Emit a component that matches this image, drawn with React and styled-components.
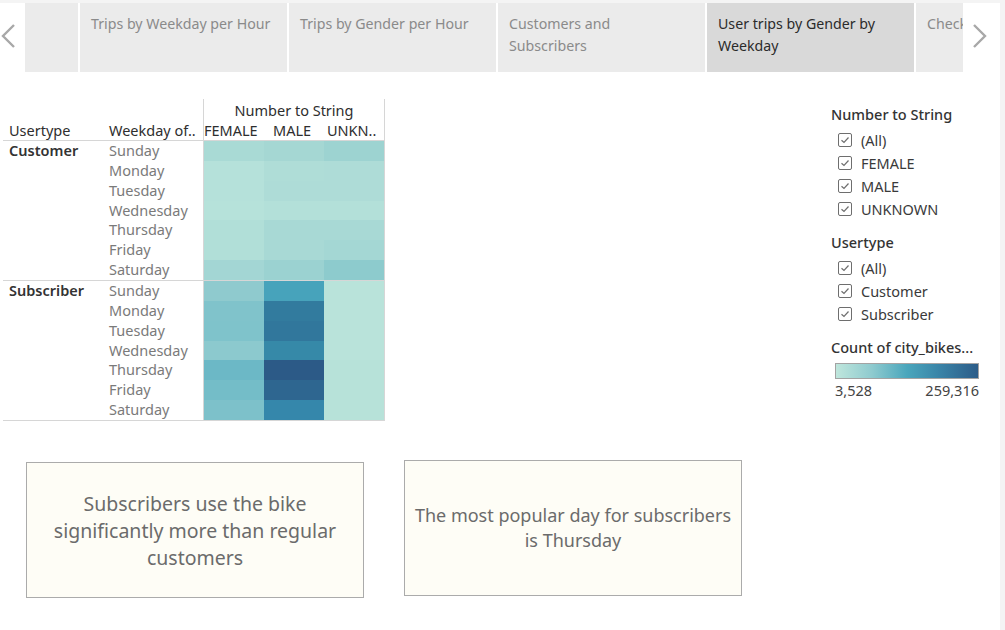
import React from 'react';
import styled, { createGlobalStyle } from 'styled-components';

const GlobalStyle = createGlobalStyle`
  html, body {
    margin: 0;
    padding: 0;
    background: #ffffff;
  }
  body {
    font-family: "Noto Sans", "Open Sans", sans-serif;
    color: #333;
  }
`;

const Page = styled.div`
  width: 1005px;
  height: 630px;
  box-sizing: border-box;
  border-top: 3px solid #f4f4f4;
  border-right: 5px solid #f4f4f4;
  overflow: hidden;
`;

const TabBar = styled.div`
  display: flex;
  align-items: stretch;
  height: 69px;
`;

const ArrowButton = styled.div`
  width: ${p => p.$w}px;
  flex: none;
  display: flex;
  align-items: flex-start;
  justify-content: ${p => (p.$start ? 'flex-start' : 'center')};
  padding-top: 20px;
  box-sizing: border-box;
`;

const TabStrip = styled.div`
  display: flex;
  gap: 2px;
  width: 938px;
  overflow: hidden;
  flex: none;
`;

const Tab = styled.div`
  flex: none;
  width: ${p => p.$w}px;
  box-sizing: border-box;
  padding: 10px 15px 0 11px;
  background: ${p => (p.$active ? '#d9d9d9' : '#ebebeb')};
  color: ${p => (p.$active ? '#2b2b2b' : '#8a8a8a')};
  font-size: 14.2px;
  line-height: 22px;
  white-space: ${p => (p.$clip ? 'nowrap' : 'normal')};
  overflow: hidden;
`;

const Main = styled.div`
  display: flex;
  padding-top: 27px;
`;

const LeftCol = styled.div`
  width: 831px;
  flex: none;
`;

const Table = styled.div`
  margin-left: 3px;
  width: 382px;
`;

const HeaderRow = styled.div`
  display: flex;
  height: 41px;
  border-bottom: 1px solid #d6d6d6;
`;

const HeadLabel = styled.div`
  width: ${p => p.$w}px;
  flex: none;
  box-sizing: border-box;
  padding-left: 6px;
  align-self: flex-end;
  font-size: 14.5px;
  line-height: 20px;
  color: #2e2e2e;
  white-space: nowrap;
`;

const HeatHead = styled.div`
  width: 180px;
  flex: none;
  border-left: 1px solid #d6d6d6;
  border-right: 1px solid #d6d6d6;
  display: flex;
  flex-direction: column;
  justify-content: flex-end;
`;

const HeatTitle = styled.div`
  text-align: center;
  font-size: 14.5px;
  line-height: 20px;
  color: #2e2e2e;
`;

const HeatCols = styled.div`
  display: grid;
  grid-template-columns: 69px 54px 57px;
  font-size: 14.5px;
  line-height: 20px;
  color: #2e2e2e;
  white-space: nowrap;
`;

const Group = styled.div`
  display: flex;
  height: 139px;
  border-bottom: 1px solid #d6d6d6;
`;

const TypeCell = styled.div`
  width: 100px;
  flex: none;
  box-sizing: border-box;
  padding-left: 6px;
  font-size: 14.5px;
  line-height: 19px;
  font-weight: 600;
  color: #333;
`;

const DayCol = styled.div`
  width: 100px;
  flex: none;
  box-sizing: border-box;
  padding-left: 6px;
  display: grid;
  grid-template-rows: repeat(7, 1fr);
`;

const DayLabel = styled.div`
  font-size: 14.5px;
  line-height: 19px;
  color: #7a7a7a;
`;

const HeatGrid = styled.div`
  width: 180px;
  flex: none;
  border-left: 1px solid #d6d6d6;
  border-right: 1px solid #d6d6d6;
  display: grid;
  grid-template-columns: repeat(3, 60px);
  grid-template-rows: repeat(7, 1fr);
`;

const Cell = styled.div`
  background: ${p => p.$c};
`;

const Notes = styled.div`
  display: flex;
  gap: 40px;
  padding: 39px 0 0 26px;
  align-items: flex-start;
`;

const NoteBox = styled.div`
  width: 338px;
  height: 136px;
  box-sizing: border-box;
  margin-top: ${p => (p.$drop ? 2 : 0)}px;
  background: #fefdf6;
  border: 1px solid #ababab;
  display: flex;
  align-items: center;
  justify-content: center;
  text-align: center;
  padding: ${p => (p.$pad ? '0 18px' : '0 6px')};
  color: #6b6b6b;
  font-size: ${p => p.$fs}px;
  line-height: ${p => p.$lh}px;
`;

const Legend = styled.div`
  padding-top: 5px;
  width: 160px;
`;

const LegendTitle = styled.div`
  font-size: 14.5px;
  line-height: 20px;
  font-weight: 500;
  color: #333;
  white-space: nowrap;
  margin-bottom: 4px;
`;

const CheckList = styled.div`
  display: flex;
  flex-direction: column;
  padding-left: 7px;
  margin-bottom: 12px;
`;

const CheckItem = styled.div`
  display: flex;
  align-items: center;
  gap: 9px;
  height: 23px;
  font-size: 14.5px;
  color: #3a3a3a;
`;

const Box = styled.span`
  width: 14px;
  height: 14px;
  box-sizing: border-box;
  border: 1px solid #6e6e6e;
  border-radius: 2px;
  display: inline-flex;
  align-items: center;
  justify-content: center;
  background: #fff;
`;

const ColorBar = styled.div`
  margin: 6px 0 0 4px;
  width: 144px;
  height: 16px;
  box-sizing: border-box;
  border: 1px solid #a3a3a3;
  background: linear-gradient(90deg, #bfe6dc 0%, #8fcbcf 25%, #4aa6bc 50%, #3a85a8 72%, #2c5c88 100%);
`;

const Range = styled.div`
  display: flex;
  justify-content: space-between;
  width: 144px;
  margin-left: 4px;
  font-size: 14.5px;
  line-height: 22px;
  color: #444;
`;

const Chevron = ({ dir }) => (
  <svg width="16" height="26" viewBox="0 0 16 26">
    <path
      d={dir === 'left' ? 'M14 2 L3 13 L14 24' : 'M2 2 L13 13 L2 24'}
      fill="none"
      stroke="#a8a8a8"
      strokeWidth="2.4"
    />
  </svg>
);

const Tick = () => (
  <svg width="12" height="12" viewBox="0 0 12 12">
    <path d="M2.5 6.2 L5 8.5 L9.5 3.5" fill="none" stroke="#6e6e6e" strokeWidth="1.2" />
  </svg>
);

const tabs = [
  { label: '', w: 53 },
  { label: 'Trips by Weekday per Hour', w: 207 },
  { label: 'Trips by Gender per Hour', w: 207 },
  { label: 'Customers and Subscribers', w: 207 },
  { label: 'User trips by Gender by Weekday', w: 207, active: true },
  { label: 'Checkout Times', w: 48, clip: true },
];

const days = ['Sunday', 'Monday', 'Tuesday', 'Wednesday', 'Thursday', 'Friday', 'Saturday'];

const groups = [
  {
    name: 'Customer',
    cells: [
      ['#a9dad5', '#a5d7d3', '#9dd3d1'],
      ['#b5e1da', '#afddd7', '#aedcd7'],
      ['#b5e1da', '#aedcd7', '#aedcd7'],
      ['#b6e2da', '#b3e0d9', '#b3e0d9'],
      ['#b1dfd8', '#a8d9d5', '#a8d9d5'],
      ['#b1dfd8', '#a8d9d5', '#a4d7d4'],
      ['#a3d6d4', '#9bd2d1', '#8dcbcd'],
    ],
  },
  {
    name: 'Subscriber',
    cells: [
      ['#8fcace', '#47a3bb', '#b9e3da'],
      ['#80c3cb', '#327b9e', '#b9e3da'],
      ['#7fc3cb', '#31779c', '#b9e3da'],
      ['#8cc9ce', '#3689a8', '#b9e3da'],
      ['#6cb8c6', '#2c5a87', '#b7e2d9'],
      ['#74bdc8', '#2e6690', '#b7e2d9'],
      ['#7dc1ca', '#3587ab', '#b7e2d9'],
    ],
  },
];

const filters = [
  { title: 'Number to String', items: ['(All)', 'FEMALE', 'MALE', 'UNKNOWN'] },
  { title: 'Usertype', items: ['(All)', 'Customer', 'Subscriber'] },
];

export default function App() {
  return (
    <Page>
      <GlobalStyle />
      <TabBar>
        <ArrowButton $w={25} $start>
          <Chevron dir="left" />
        </ArrowButton>
        <TabStrip>
          {tabs.map((t, i) => (
            <Tab key={i} $w={t.w} $active={t.active} $clip={t.clip}>
              {t.label}
            </Tab>
          ))}
        </TabStrip>
        <ArrowButton $w={34}>
          <Chevron dir="right" />
        </ArrowButton>
      </TabBar>

      <Main>
        <LeftCol>
          <Table>
            <HeaderRow>
              <HeadLabel $w={100}>Usertype</HeadLabel>
              <HeadLabel $w={100}>Weekday of..</HeadLabel>
              <HeatHead>
                <HeatTitle>Number to String</HeatTitle>
                <HeatCols>
                  <span>FEMALE</span>
                  <span>MALE</span>
                  <span>UNKN..</span>
                </HeatCols>
              </HeatHead>
            </HeaderRow>
            {groups.map(g => (
              <Group key={g.name}>
                <TypeCell>{g.name}</TypeCell>
                <DayCol>
                  {days.map(d => (
                    <DayLabel key={d}>{d}</DayLabel>
                  ))}
                </DayCol>
                <HeatGrid>
                  {g.cells.flat().map((c, i) => (
                    <Cell key={i} $c={c} />
                  ))}
                </HeatGrid>
              </Group>
            ))}
          </Table>

          <Notes>
            <NoteBox $drop $fs={19.5} $lh={27} $pad>
              Subscribers use the bike significantly more than regular customers
            </NoteBox>
            <NoteBox $fs={18} $lh={25}>
              The most popular day for subscribers is Thursday
            </NoteBox>
          </Notes>
        </LeftCol>

        <Legend>
          {filters.map(f => (
            <div key={f.title}>
              <LegendTitle>{f.title}</LegendTitle>
              <CheckList>
                {f.items.map(it => (
                  <CheckItem key={it}>
                    <Box>
                      <Tick />
                    </Box>
                    {it}
                  </CheckItem>
                ))}
              </CheckList>
            </div>
          ))}
          <LegendTitle>Count of city_bikes...</LegendTitle>
          <ColorBar />
          <Range>
            <span>3,528</span>
            <span>259,316</span>
          </Range>
        </Legend>
      </Main>
    </Page>
  );
}
